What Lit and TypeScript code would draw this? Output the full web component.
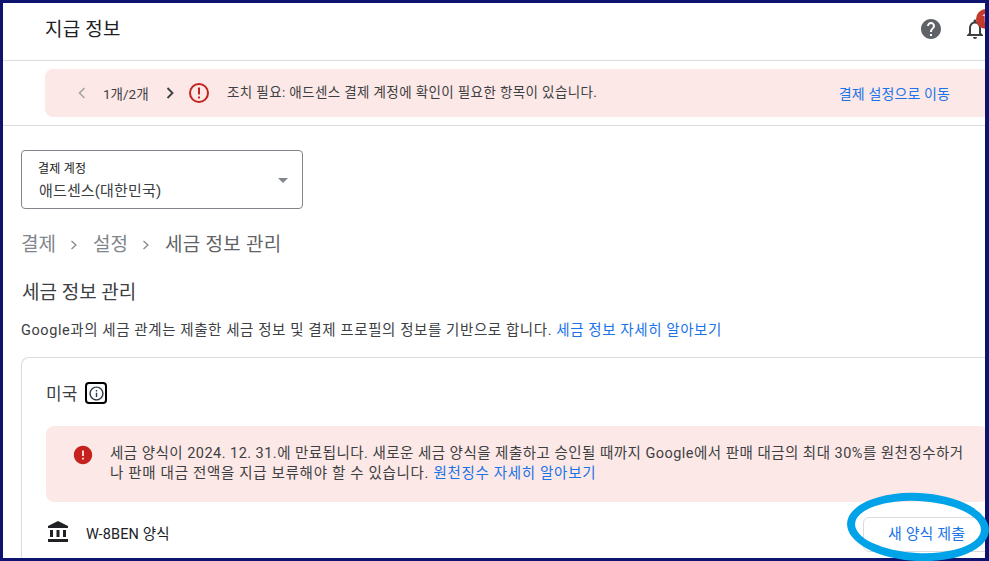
import { LitElement, html, css } from "lit";
import { customElement } from "lit/decorators.js";

@customElement("app-root")
export class AppRoot extends LitElement {
  static styles = css`
    :host { display: block; position: relative; width: 989px; height: 561px; overflow: hidden; background: #fff;
      font-family: Roboto, "Noto Sans CJK KR", sans-serif; color: #3c4043; }
    * { box-sizing: border-box; }
    a { color: #1a73e8; text-decoration: none; }
    svg { display: block; flex: none; }
    .page { width: 985px; height: 558px; margin: 3px 0 0 3px; overflow: hidden; position: relative; }
    .header { height: 58px; border-bottom: 1px solid #dadce0; display: flex; align-items: center; padding: 0 0 8px 42px; }
    .title { font-size: 19px; color: #202124; flex: 1; letter-spacing: 0.2px; }
    .help { margin-right: 20px; margin-top: 2px; }
    .bell { position: relative; width: 36px; height: 24px; margin-top: 2px; margin-right: -11px; }
    .badge { position: absolute; left: 13px; top: -8px; width: 20px; height: 20px; border-radius: 50%; background: #c5392a; color: #fff; font-size: 11px; padding-left: 6px; line-height: 20px; }
    .banner-row { height: 65px; border-bottom: 1px solid #dadce0; padding: 8px 0 0 42px; }
    .banner { height: 48px; background: #fce8e6; border-radius: 8px 0 0 8px; display: flex; align-items: center; font-size: 13.5px; color: #3c4043; padding-left: 30px; }
    .count { margin: 0 14px 0 14px; width: 46px; font-size: 13.5px; white-space: nowrap; }
    .bt { margin-left: 17px; flex: 1; white-space: nowrap; margin-top: -5px; letter-spacing: 0.38px; }
    .go { margin-right: 38px; font-size: 14px; letter-spacing: 0.12px; }
    .body { padding: 24px 0 0 18px; }
    .select { width: 282px; height: 59px; border: 1px solid #80868b; border-radius: 4px; padding: 10px 0 0 17px; position: relative; }
    .sl { font-size: 12px; color: #202124; line-height: 16px; letter-spacing: 0.25px; margin-left: -1px; }
    .sv { font-size: 15px; color: #3c4043; line-height: 24px; margin-top: 2px; letter-spacing: 0.15px; }
    .arrow { position: absolute; right: 14px; top: 27px; width: 0; height: 0; border: 5px solid transparent; border-top: 5px solid #80868b; border-bottom: 0; }
    .crumbs { display: flex; align-items: center; font-size: 19px; color: #80868b; margin-top: 22px; line-height: 28px; }
    .crumbs svg { margin: 0 12.5px; }
    .crumbs b { font-weight: 400; color: #5f6368; letter-spacing: 0.3px; }
    h2 { font-weight: 400; font-size: 19px; color: #3c4043; margin: 20px 0 0; line-height: 28px; padding-left: 1px; }
    .intro { font-size: 14.5px; letter-spacing: 0.58px; color: #3c4043; margin: 14px 0 0; line-height: 20px; white-space: nowrap; }
    .card { margin-top: 16px; height: 240px; border: 1px solid #dadce0; border-right: 0; border-radius: 8px 0 0 0; padding: 21px 0 0 24px; }
    .ct { display: flex; align-items: center; font-size: 17px; color: #3c4043; height: 28px; }
    .ct span:first-child { margin-top: -2px; }
    .info { margin-left: 8px; width: 22px; height: 22px; border: 2.5px solid #000; border-radius: 4px; display: flex; align-items: center; justify-content: center; }
    .alert { margin-top: 19px; height: 76px; background: #fce8e6; border-radius: 8px; display: flex; padding: 18px 20px 0 26px; font-size: 14.5px; letter-spacing: 0.47px; line-height: 20px; }
    .alert svg { margin-right: 16px; }
    .alert p { margin: 0; }
    .l2 { letter-spacing: 0.68px; }
    .row { display: flex; align-items: center; height: 44px; margin-top: 8px; font-size: 14.5px; color: #202124; }
    .row .n { margin-left: 16px; flex: 1; letter-spacing: 0.15px; }
    .btn { width: 125px; height: 35px; border: 1px solid #dadce0; border-radius: 6px 0 0 6px; color: #1a73e8; display: flex; align-items: center; padding: 0 0 4px 24px; font-size: 15px; letter-spacing: 0.1px; margin-top: 5px; white-space: nowrap; }
    .frame { position: absolute; inset: 0; border: solid #0f1370; border-width: 3px 4px 3px 3px; pointer-events: none; }
    .ring { position: absolute; left: 847px; top: 493px; width: 142px; height: 68px; border: 8px solid #00a3e8; border-radius: 50%; transform: rotate(3deg); }
  `;

  render() {
    return html`
      <div class="page">
        <div class="header">
          <div class="title">지급 정보</div>
          <svg class="help" width="24" height="24" viewBox="0 0 24 24" fill="#5f6368"><path d="M12 2C6.48 2 2 6.48 2 12s4.48 10 10 10 10-4.48 10-10S17.52 2 12 2zm1 17h-2v-2h2v2zm2.07-7.75l-.9.92C13.45 12.9 13 13.5 13 15h-2v-.5c0-1.1.45-2.1 1.17-2.83l1.24-1.26c.37-.36.59-.86.59-1.41 0-1.1-.9-2-2-2s-2 .9-2 2H8c0-2.21 1.79-4 4-4s4 1.79 4 4c0 .88-.36 1.68-.93 2.25z"/></svg>
          <div class="bell">
            <svg width="24" height="24" viewBox="0 0 24 24" fill="#3c4043"><path d="M12 22c1.1 0 2-.9 2-2h-4c0 1.1.9 2 2 2zm6-6v-5c0-3.07-1.63-5.64-4.5-6.32V4c0-.83-.67-1.5-1.5-1.5s-1.5.67-1.5 1.5v.68C7.64 5.36 6 7.92 6 11v5l-2 2v1h16v-1l-2-2zm-2 1H8v-6c0-2.48 1.51-4.5 4-4.5s4 2.02 4 4.5v6z"/></svg>
            <div class="badge">1</div>
          </div>
        </div>
        <div class="banner-row">
          <div class="banner">
            <svg width="14" height="14" viewBox="0 0 14 14" fill="none" stroke="#a8a4a4" stroke-width="1.6"><path d="M9.5 2 4.5 7l5 5"/></svg>
            <span class="count">1개/2개</span>
            <svg width="14" height="14" viewBox="0 0 14 14" fill="none" stroke="#3c4043" stroke-width="1.8"><path d="M4.5 2l5 5-5 5"/></svg>
            <svg style="margin-left:11px" width="22" height="22" viewBox="0 0 22 22" fill="none"><circle cx="11" cy="11" r="9" stroke="#c5221f" stroke-width="2"/><path d="M10 5.5h2v7h-2zM10 14.5h2v2h-2z" fill="#c5221f"/></svg>
            <span class="bt">조치 필요: 애드센스 결제 계정에 확인이 필요한 항목이 있습니다.</span>
            <a class="go" href="#">결제 설정으로 이동</a>
          </div>
        </div>
        <div class="body">
          <div class="select">
            <div class="sl">결제 계정</div>
            <div class="sv">애드센스(대한민국)</div>
            <div class="arrow"></div>
          </div>
          <div class="crumbs">
            <span>결제</span>
            <svg width="12" height="12" viewBox="0 0 12 12" fill="none" stroke="#80868b" stroke-width="1.2"><path d="M3.5 2l4.5 4-4.5 4"/></svg>
            <span>설정</span>
            <svg width="12" height="12" viewBox="0 0 12 12" fill="none" stroke="#80868b" stroke-width="1.2"><path d="M3.5 2l4.5 4-4.5 4"/></svg>
            <b>세금 정보 관리</b>
          </div>
          <h2>세금 정보 관리</h2>
          <p class="intro">Google과의 세금 관계는 제출한 세금 정보 및 결제 프로필의 정보를 기반으로 합니다. <a href="#">세금 정보 자세히 알아보기</a></p>
          <div class="card">
            <div class="ct"><span>미국</span>
              <span class="info"><svg width="17" height="17" viewBox="0 0 24 24" fill="#2f3a4a"><path d="M11 7h2v2h-2zm0 4h2v6h-2zm1-9C6.48 2 2 6.48 2 12s4.48 10 10 10 10-4.48 10-10S17.52 2 12 2zm0 18c-4.41 0-8-3.59-8-8s3.59-8 8-8 8 3.59 8 8-3.59 8-8 8z"/></svg></span>
            </div>
            <div class="alert">
              <svg width="22" height="22" viewBox="0 0 24 24" fill="#c5221f"><path d="M12 2C6.48 2 2 6.48 2 12s4.48 10 10 10 10-4.48 10-10S17.52 2 12 2zm1 15h-2v-2h2v2zm0-4h-2V7h2v6z"/></svg>
              <p>세금 양식이 2024. 12. 31.에 만료됩니다. 새로운 세금 양식을 제출하고 승인될 때까지 Google에서 판매 대금의 최대 30%를 원천징수하거 <span class="l2">나 판매 대금 전액을 지급 보류해야 할 수 있습니다. <a href="#">원천징수 자세히 알아보기</a></span></p>
            </div>
            <div class="row">
              <svg width="24" height="24" viewBox="0 0 24 24" fill="#202124"><path d="M4 10h3v7H4zm6.5 0h3v7h-3zM2 19h20v3H2zm15-9h3v7h-3zM12 1 2 6v2h20V6z"/></svg>
              <span class="n">W-8BEN 양식</span>
              <span class="btn">새 양식 제출</span>
            </div>
          </div>
        </div>
      </div>
      <div class="frame"></div>
      <div class="ring"></div>
    `;
  }
}
